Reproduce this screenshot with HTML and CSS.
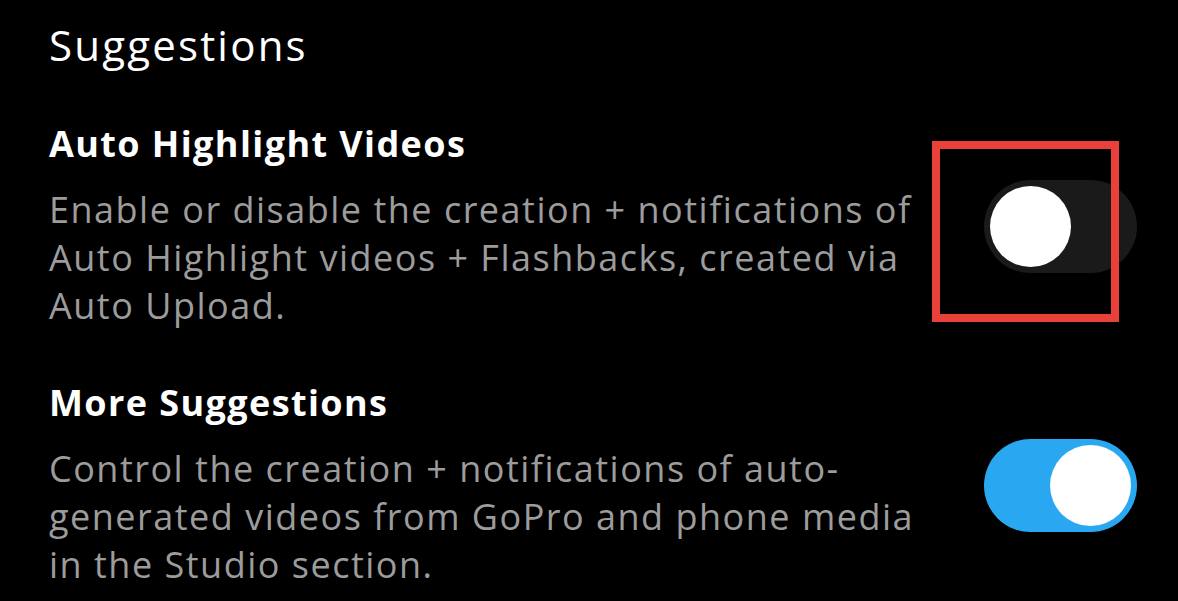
FILE: index.html
```html
<!DOCTYPE html>
<html>
<head>
<meta charset="utf-8">
<link rel="stylesheet" href="styles.css">
</head>
<body>
<main class="page">
  <h1 class="section-title">Suggestions</h1>
  <section class="setting first">
    <div class="setting-text">
      <h2 class="setting-name">Auto Highlight Videos</h2>
      <p class="setting-desc">Enable or disable the creation + notifications of<br>Auto Highlight videos + Flashbacks, created via<br>Auto Upload.</p>
    </div>
    <div class="toggle-wrap">
      <div class="toggle off"><span class="knob"></span></div>
      <div class="highlight-box"></div>
    </div>
  </section>
  <section class="setting second">
    <div class="setting-text">
      <h2 class="setting-name">More Suggestions</h2>
      <p class="setting-desc">Control the creation + notifications of auto-<br>generated videos from GoPro and phone media<br>in the Studio section.</p>
    </div>
    <div class="toggle-wrap">
      <div class="toggle on"><span class="knob"></span></div>
    </div>
  </section>
</main>
</body>
</html>
```

FILE: styles.css
```css
html, body {
  margin: 0;
  padding: 0;
  background: #000;
  height: 100%;
  overflow: hidden;
}
.page {
  font-family: "Open Sans", "Noto Sans", sans-serif;
  color: #fff;
  padding: 17px 41px 0 49px;
}
.section-title {
  margin: 0;
  font-size: 42px;
  font-weight: 400;
  line-height: 56px;
  letter-spacing: 2.2px;
}
.setting {
  display: flex;
  align-items: center;
  justify-content: space-between;
}
.setting.first {
  margin-top: 49px;
}
.setting.second {
  margin-top: 51px;
}
.setting-name {
  margin: 0;
  font-size: 36px;
  font-weight: 700;
  line-height: 44px;
  letter-spacing: 1.4px;
}
.setting-desc {
  margin: 20px 0 0;
  font-size: 36px;
  line-height: 48px;
  letter-spacing: 1.5px;
  color: #9c9c9c;
  white-space: nowrap;
}
.toggle-wrap {
  position: relative;
  margin-top: 1px;
}
.toggle {
  width: 153px;
  height: 93px;
  border-radius: 47px;
  box-sizing: border-box;
  padding: 6px;
  display: flex;
  align-items: center;
}
.toggle.off {
  background: #1a1a1a;
  justify-content: flex-start;
}
.toggle.on {
  background: #29a8f1;
  justify-content: flex-end;
}
.knob {
  width: 81px;
  height: 81px;
  border-radius: 50%;
  background: #fff;
}
.highlight-box {
  position: absolute;
  left: -52px;
  top: -39px;
  width: 187px;
  height: 181px;
  box-sizing: border-box;
  border: 8px solid #e9413a;
}
```
